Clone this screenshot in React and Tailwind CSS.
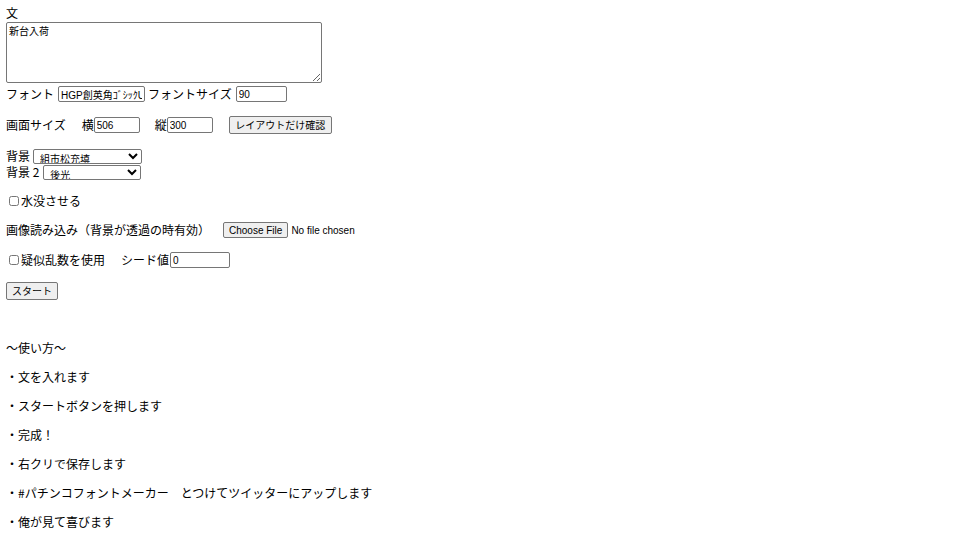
import React, { useState } from 'react';

const jp = { fontFamily: '"Noto Sans CJK JP", "Liberation Sans", sans-serif' };
const latin = { fontFamily: '"Liberation Sans", "Noto Sans CJK JP", sans-serif' };

const inputCls = "h-[16px] border border-[#767676] rounded-[2px] px-[2px] text-[10px] leading-[14px] bg-white text-black outline-none";
const btnCls = "flex items-center justify-center whitespace-nowrap border border-[#767676] rounded-[2px] bg-[#efefef] text-[10px] text-black px-0 leading-none";
const selectCls = "border border-[#767676] rounded-[2px] bg-white text-[10px] text-black pl-[2px]";

const usage = [
    "・文を入れます",
    "・スタートボタンを押します",
    "・完成！",
    "・右クリで保存します",
    "・#パチンコフォントメーカー　とつけてツイッターにアップします",
    "・俺が見て喜びます",
];

const App = () => {
    const [text, setText] = useState("新台入荷");
    const [font, setFont] = useState("HGP創英角ｺﾞｼｯｸUB");
    const [fontSize, setFontSize] = useState("90");
    const [w, setW] = useState("506");
    const [h, setH] = useState("300");
    const [seed, setSeed] = useState("0");

    return (
        <div className="min-h-[540px] bg-white text-black text-[12px] pl-[6px] pt-[4px]" style={jp}>
            <div className="h-[18px] leading-[18px]">文</div>
            <textarea
                value={text}
                onChange={e => setText(e.target.value)}
                className="block w-[316px] h-[61px] border border-[#767676] rounded-[2px] px-[2px] py-[1px] text-[10px] leading-[14px] resize"
                style={jp}
            />

            <div className="h-[22px] flex items-center">
                <span>フォント</span>
                <input value={font} onChange={e => setFont(e.target.value)} className={`${inputCls} w-[87px] ml-[4px] text-[10.5px]`} style={latin} />
                <span className="ml-[3px]">フォントサイズ</span>
                <input value={fontSize} onChange={e => setFontSize(e.target.value)} className={`${inputCls} w-[51px] ml-[4px]`} style={latin} />
            </div>

            <div className="h-[22px] mt-[9px] flex items-center">
                <span>画面サイズ</span>
                <span className="ml-[16px]">横</span>
                <input value={w} onChange={e => setW(e.target.value)} className={`${inputCls} w-[46px]`} style={latin} />
                <span className="ml-[15px]">縦</span>
                <input value={h} onChange={e => setH(e.target.value)} className={`${inputCls} w-[46px]`} style={latin} />
                <button type="button" className={`${btnCls} h-[18px] w-[103px] ml-[16px]`} style={jp}>レイアウトだけ確認</button>
            </div>

            <div className="h-[16px] mt-[12px] flex items-center">
                <span>背景</span>
                <select className={`${selectCls} h-[15px] w-[109px] ml-[3px]`} style={jp} defaultValue="組市松充填">
                    <option>組市松充填</option>
                    <option>透過</option>
                </select>
            </div>
            <div className="h-[16px] flex items-center">
                <span>背景 2</span>
                <select className={`${selectCls} h-[15px] w-[98px] ml-[4px]`} style={jp} defaultValue="後光">
                    <option>後光</option>
                    <option>なし</option>
                </select>
            </div>

            <label className="h-[20px] mt-[11px] flex items-center">
                <input type="checkbox" className="w-[10px] h-[10px] ml-[3px] mr-[2px]" />
                <span>水没させる</span>
            </label>

            <div className="h-[20px] mt-[9px] flex items-center">
                <span>画像読み込み（背景が透過の時有効）</span>
                <input
                    type="file"
                    className="ml-[13px] text-[10px] file:h-[16px] file:border file:border-[#767676] file:rounded-[2px] file:bg-[#efefef] file:px-[5px] file:mr-[3px] file:text-black"
                    style={latin}
                />
            </div>

            <div className="h-[20px] mt-[10px] flex items-center">
                <input type="checkbox" className="w-[10px] h-[10px] ml-[3px] mr-[2px]" />
                <span>疑似乱数を使用</span>
                <span className="ml-[16px]">シード値</span>
                <input value={seed} onChange={e => setSeed(e.target.value)} className={`${inputCls} w-[60px] ml-[1px]`} style={latin} />
            </div>

            <button type="button" className={`${btnCls} h-[18px] w-[52px] mt-[12px]`} style={jp}>スタート</button>

            <div className="h-[20px] mt-[38px] flex items-center">～使い方～</div>
            {usage.map(u => (
                <div key={u} className="h-[20px] mt-[9px] flex items-center">{u}</div>
            ))}
        </div>
    );
};

export default App;
